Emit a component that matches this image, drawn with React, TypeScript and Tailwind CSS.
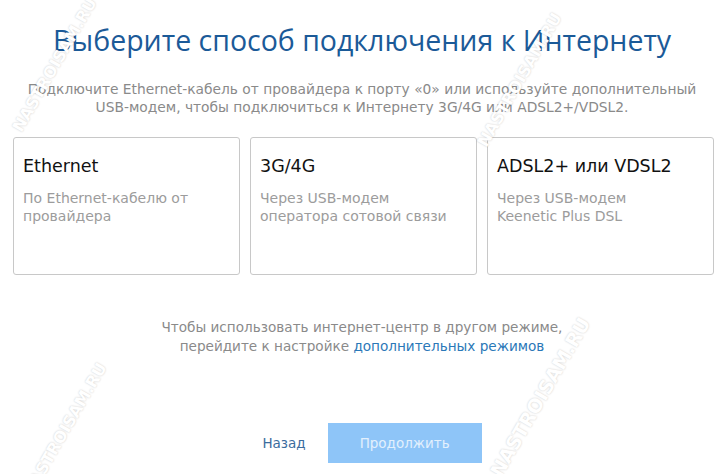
const cards = [
  { title: "Ethernet", desc: ["По Ethernet-кабелю от", "провайдера"] },
  { title: "3G/4G", desc: ["Через USB-модем", "оператора сотовой связи"] },
  { title: "ADSL2+ или VDSL2", desc: ["Через USB-модем", "Keenetic Plus DSL"] },
];

function Watermark({ className }: { className: string }) {
  return (
    <div
      className={`pointer-events-none absolute text-center whitespace-nowrap font-bold leading-[20px] text-white -rotate-[60deg] [text-shadow:0_0_2px_rgba(0,0,0,0.22)] ${className}`}
      style={{ fontFamily: "'DejaVu Sans', sans-serif" }}
    >
      NASTROISAM.RU
    </div>
  );
}

export default function App() {
  return (
    <div className="relative w-[724px] h-[474px] overflow-hidden bg-white" style={{ fontFamily: "'DejaVu Sans', Verdana, sans-serif" }}>
      <div className="flex flex-col items-center">
        <h1 className="mt-[21px] text-[28.5px] leading-[38px] text-[#1b5a98]" style={{ fontFamily: "'Open Sans', sans-serif" }}>
          Выберите способ подключения к Интернету
        </h1>
        <p className="mt-[21px] text-center text-[13.8px] leading-[18px] text-[#8a8a8a]">
          Подключите Ethernet-кабель от провайдера к порту «0» или используйте дополнительный
          <br />
          USB-модем, чтобы подключиться к Интернету 3G/4G или ADSL2+/VDSL2.
        </p>

        {/* cards */}
        <div className="mt-[21px] flex gap-[10px] self-start pl-[13px]">
          {cards.map((c) => (
            <div key={c.title} className="w-[227px] h-[138px] rounded-[3px] border border-[#c8c8c8] px-[9px] pt-[16px]">
              <h3 className="text-[17.5px] leading-[24px] text-[#111]">{c.title}</h3>
              <p className="mt-[11px] text-[14px] leading-[18px] text-[#9c9c9c]">
                {c.desc[0]}
                <br />
                {c.desc[1]}
              </p>
            </div>
          ))}
        </div>

        <p className="mt-[43px] text-center text-[13.6px] leading-[19px] text-[#8a8a8a]">
          Чтобы использовать интернет-центр в другом режиме,
          <br />
          перейдите к настройке <a className="text-[#2a78b8]">дополнительных режимов</a>
        </p>

        <div className="mt-[67px] flex items-center gap-[6px] pl-[4px]">
          <button className="h-[40px] px-[16px] text-[13.5px] text-[#3b6c9e]">Назад</button>
          <button className="h-[40px] w-[154px] bg-[#8ec5f8] text-[13.5px] text-[#e2f0fd]">Продолжить</button>
        </div>
      </div>

      <Watermark className="w-[160px] text-[16px] left-[-25px] top-[55px]" />
      <Watermark className="w-[160px] text-[16px] left-[440px] top-[70px]" />
      <Watermark className="w-[190px] text-[19px] left-[445px] top-[387px]" />
      <Watermark className="w-[160px] text-[16px] left-[-15px] top-[420px]" />
    </div>
  );
}
